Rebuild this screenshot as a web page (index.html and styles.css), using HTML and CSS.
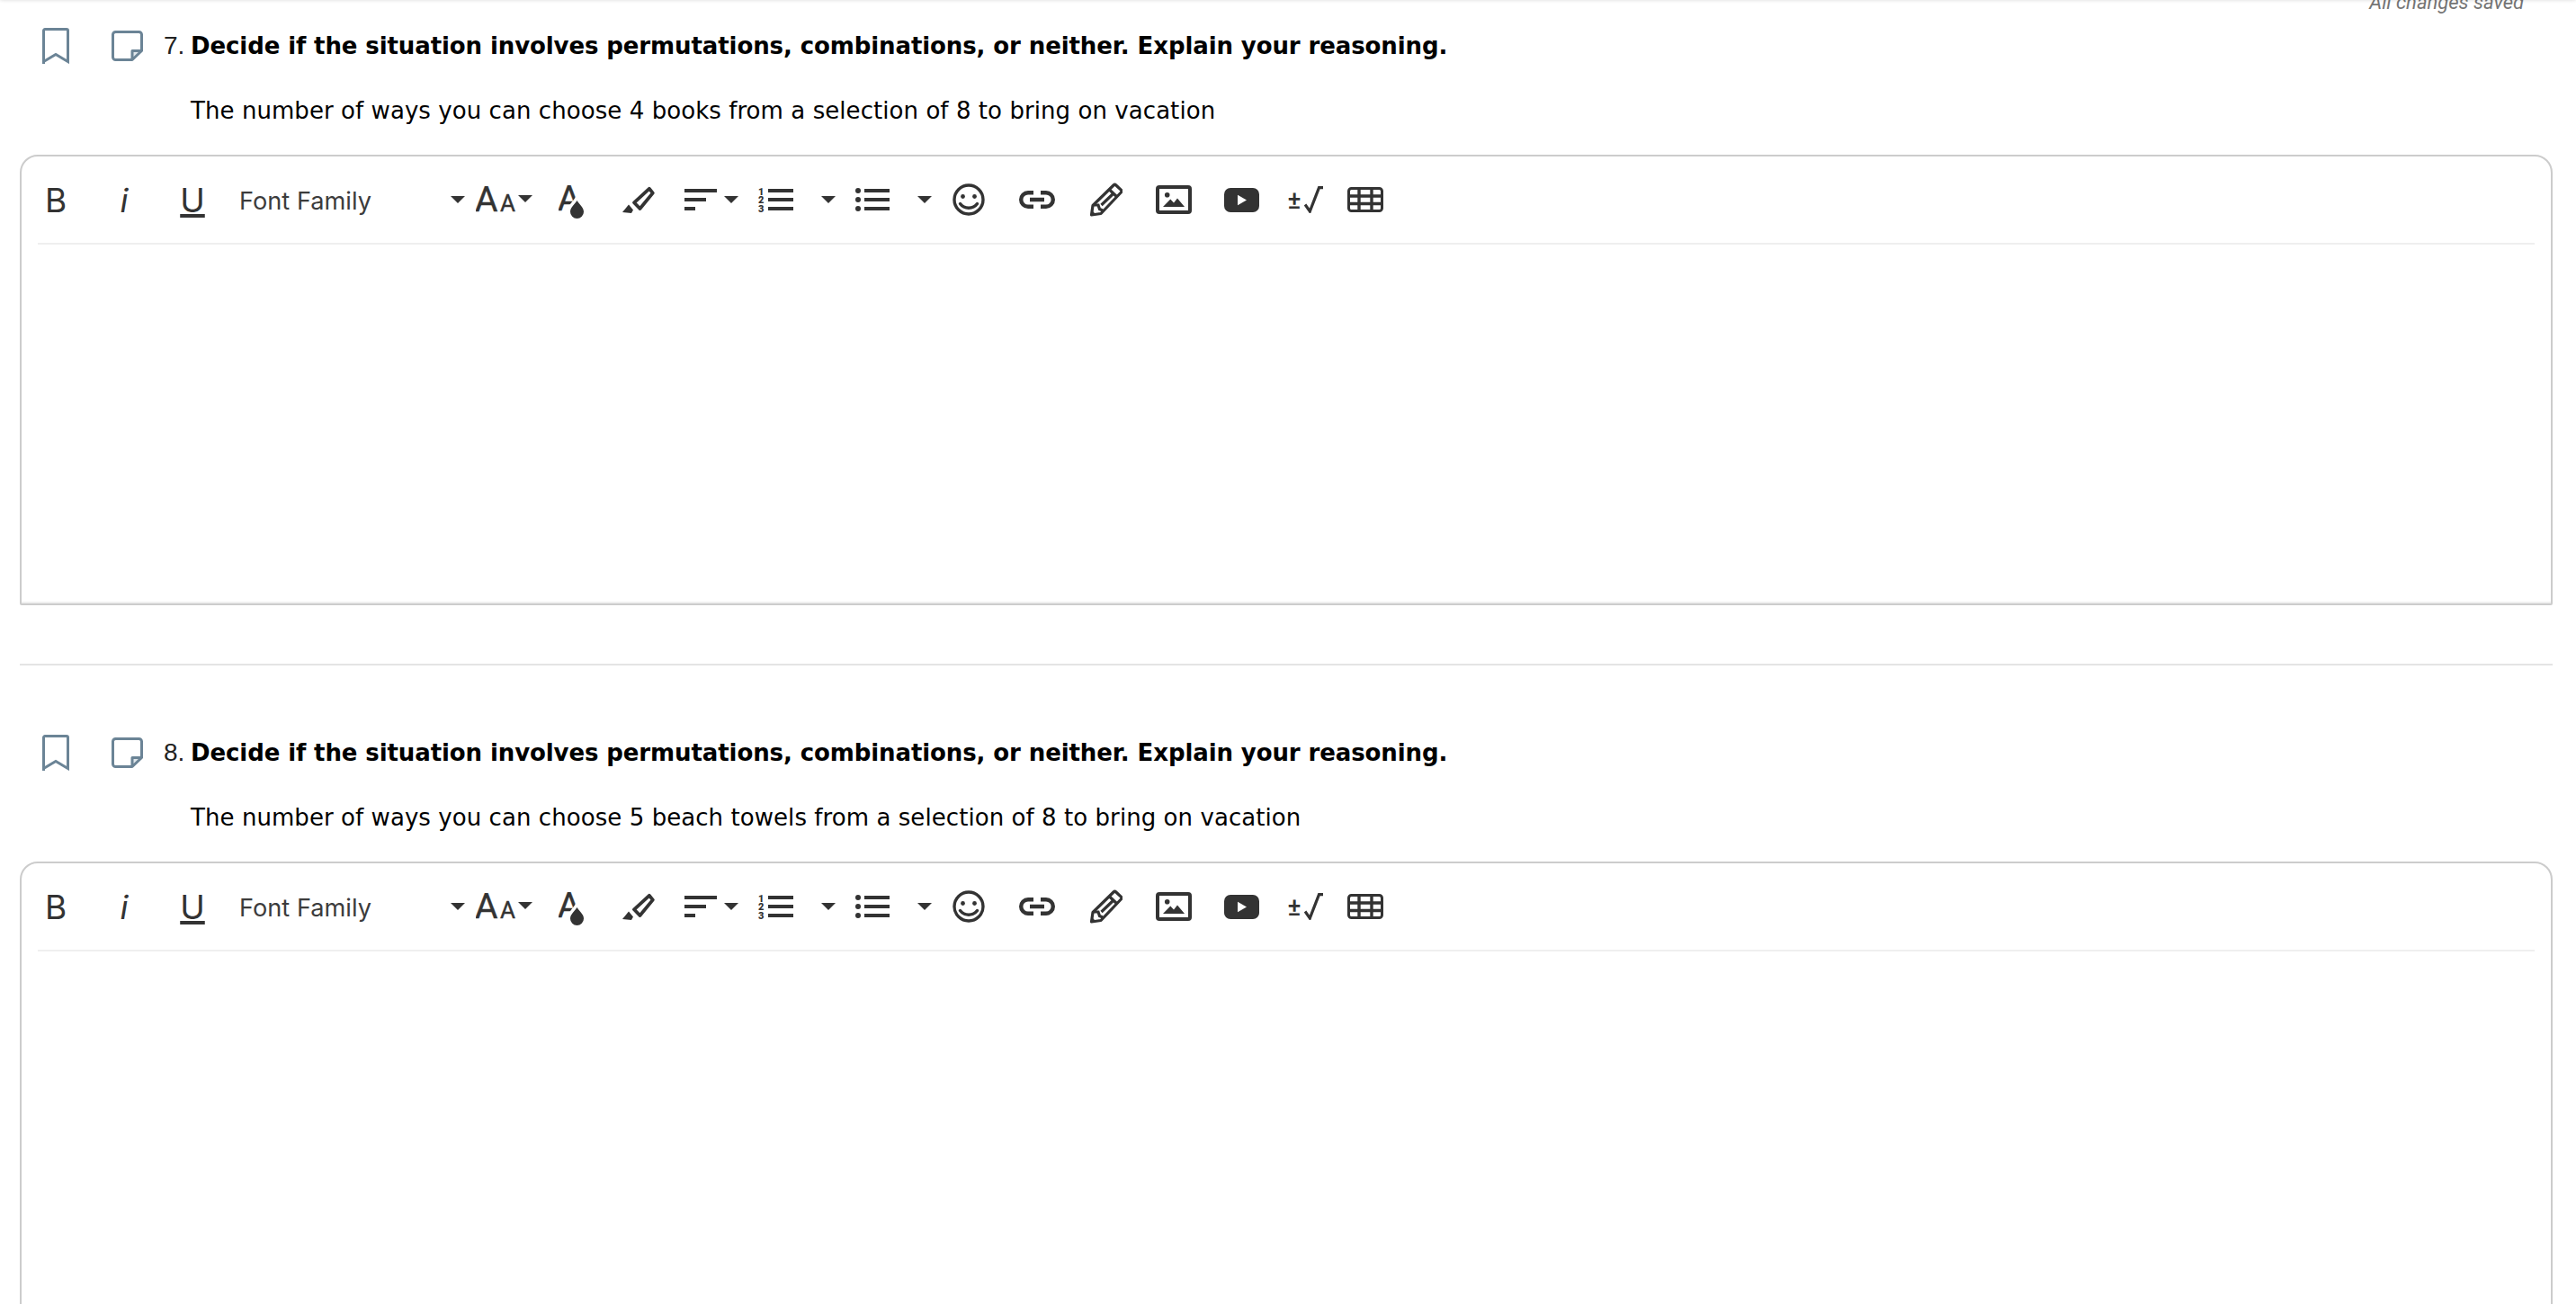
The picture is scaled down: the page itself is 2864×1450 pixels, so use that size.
FILE: index.html
```html
<!DOCTYPE html>
<html lang="en">
<head>
<meta charset="utf-8">
<title>Questions</title>
<link rel="stylesheet" href="styles.css">
</head>
<body>
<svg class="sprite" aria-hidden="true">
  <symbol id="i-bookmark" viewBox="0 0 30 40"><path d="M1.500 40V3a1.500 1.500 0 0 1 1.500-1.500h24A1.500 1.500 0 0 1 28.500 3v34.500L15 29.500 1.500 37.500" fill="none" stroke="#6b8496" stroke-width="3"/></symbol>
  <symbol id="i-note" viewBox="0 0 35 34"><path d="M23 32.500V22.500h10.500z" fill="#dfe6eb"/><path d="M4.500 1.500h26a3 3 0 0 1 3 3v18L23 32.500H4.500a3 3 0 0 1-3-3v-25a3 3 0 0 1 3-3zM23 32.500V22.500h10.500" fill="none" stroke="#6b8496" stroke-width="3" stroke-linejoin="round"/></symbol>
  <symbol id="i-caret" viewBox="0 0 16 8"><path d="M0 0h16L8 8z" fill="#333"/></symbol>
  <symbol id="i-mark" viewBox="0 0 37 32"><path d="M29.800 2.800 33.800 7.600 19.500 25 13 18.300z" fill="none" stroke="#333" stroke-width="3.800" stroke-linejoin="round"/><path d="M0 29 7 20.500 12 26.500 10 30z" fill="#333"/></symbol>
  <symbol id="i-align" viewBox="0 0 60 24"><path d="M0 0h36v4H0zM0 10h24v4H0zM0 20h12v4H0z" fill="#333"/><path d="M44 8h16l-8 8z" fill="#333"/></symbol>
  <symbol id="i-ul" viewBox="0 0 85 28"><circle cx="3" cy="4" r="3" fill="#333"/><circle cx="3" cy="14" r="3" fill="#333"/><circle cx="3" cy="24" r="3" fill="#333"/><path d="M10 2h28v4H10zM10 12h28v4H10zM10 22h28v4H10z" fill="#333"/><path d="M69 10h16l-8 8z" fill="#333"/></symbol>
  <symbol id="i-smile" viewBox="0 0 36 36"><circle cx="18" cy="18" r="16" fill="none" stroke="#333" stroke-width="3.400"/><circle cx="11.500" cy="14.500" r="2.400" fill="#333"/><circle cx="24.500" cy="14.500" r="2.400" fill="#333"/><path d="M8.500 22.500c2.200 3 5.800 4.700 9.500 4.700s7.300-1.700 9.500-4.700" fill="none" stroke="#333" stroke-width="3.400" stroke-linecap="round"/></symbol>
  <symbol id="i-link" viewBox="0 0 40 20"><path d="M16 2.200H10a7.800 7.800 0 0 0 0 15.600H16M24 2.200h6a7.800 7.800 0 0 1 0 15.600h-6M12 10h16" fill="none" stroke="#333" stroke-width="4.400"/></symbol>
  <symbol id="i-pencil" viewBox="0 0 36 38"><path d="M1.500 36 3 25.500 26 3a2 2 0 0 1 2.800 0l5.500 5.200a2 2 0 0 1 0 2.800L12 34.500z" fill="none" stroke="#333" stroke-width="3.200" stroke-linejoin="round"/><path d="M21 7.500l9 8.500M12.500 25 25 13M4 25h5l1.500 4.500L14 31" fill="none" stroke="#333" stroke-width="3.200"/><path d="M1.500 36 2 31l4 4z" fill="#333"/></symbol>
  <symbol id="i-image" viewBox="0 0 40 32"><rect x="2" y="2" width="36" height="28" rx="2" fill="none" stroke="#333" stroke-width="4"/><circle cx="12.700" cy="10.700" r="2.800" fill="#333"/><path d="M8 24 16.300 15.500 20 19.500 24 14.500 32 24z" fill="#333"/></symbol>
  <symbol id="i-video" viewBox="0 0 39 27"><rect width="39" height="27" rx="7" fill="#333"/><path d="M15 7.700 25 13.500 15 19.300z" fill="#fff"/></symbol>
  <symbol id="i-root" viewBox="0 0 21 30"><path d="M1 20.500 6.300 28 16.500 1.600H21" fill="none" stroke="#333" stroke-width="3.200"/></symbol>
  <symbol id="i-table" viewBox="0 0 40 28"><rect x="1.500" y="1.500" width="37" height="25" rx="3" fill="none" stroke="#333" stroke-width="3"/><path d="M1 10h38M1 18.500h38M13 1v26M27 1v26" fill="none" stroke="#333" stroke-width="3.400"/></symbol>
</svg>

<div class="topshade"></div>

<main class="page">
  <div class="status">All changes saved</div>

  <section class="question">
    <div class="qhead">
      <svg class="ic-bookmark"><use href="#i-bookmark"/></svg>
      <svg class="ic-note"><use href="#i-note"/></svg>
      <span class="qnum">7.</span>
      <strong class="qtitle">Decide if the situation involves permutations, combinations, or neither. Explain your reasoning.</strong>
    </div>
    <p class="prompt">The number of ways you can choose 4 books from a selection of 8 to bring on vacation</p>
    <div class="editor">
      <div class="toolbar">
        <span class="cell c-b">B</span>
        <span class="cell c-i">i</span>
        <span class="cell c-u">U</span>
        <span class="cell c-font"><span class="fontname">Font Family</span><svg class="caret"><use href="#i-caret"/></svg></span>
        <span class="cell c-size"><svg class="ic-size" viewBox="0 0 63 30"><text x="-1" y="28" class="g-a-big">A</text><text x="27" y="28" class="g-a-small">A</text><path d="M47 10h16l-8 8z" fill="#333"/></svg></span>
        <span class="cell c-color"><svg class="ic-color" viewBox="0 0 28 38"><text x="-1" y="28" class="g-a-big">A</text><path d="M20.500 17c2.500 4 7.500 7.500 7.500 12.500a7.500 7.500 0 0 1-15 0c0-5 5-8.500 7.500-12.500z" fill="#333" stroke="#fff" stroke-width="7" paint-order="stroke"/></svg></span>
        <span class="cell c-mark"><svg class="ic-mark"><use href="#i-mark"/></svg></span>
        <span class="cell c-align"><svg class="ic-align"><use href="#i-align"/></svg></span>
        <span class="cell c-ol"><svg class="ic-ol" viewBox="0 0 86 28"><text x="0" y="8.500" class="g-num">1</text><text x="0" y="18" class="g-num">2</text><text x="0" y="27.500" class="g-num">3</text><path d="M11 2h28v4H11zM11 12h28v4H11zM11 22h28v4H11z" fill="#333"/><path d="M70 10h16l-8 8z" fill="#333"/></svg></span>
        <span class="cell c-ul"><svg class="ic-ul"><use href="#i-ul"/></svg></span>
        <span class="cell c-smile"><svg class="ic-smile"><use href="#i-smile"/></svg></span>
        <span class="cell c-link"><svg class="ic-link"><use href="#i-link"/></svg></span>
        <span class="cell c-pencil"><svg class="ic-pencil"><use href="#i-pencil"/></svg></span>
        <span class="cell c-image"><svg class="ic-image"><use href="#i-image"/></svg></span>
        <span class="cell c-video"><svg class="ic-video"><use href="#i-video"/></svg></span>
        <span class="cell c-math"><span class="pm">±</span><svg class="ic-root"><use href="#i-root"/></svg></span>
        <span class="cell c-table"><svg class="ic-table"><use href="#i-table"/></svg></span>
      </div>
    </div>
  </section>

  <hr class="divider">

  <section class="question">
    <div class="qhead">
      <svg class="ic-bookmark"><use href="#i-bookmark"/></svg>
      <svg class="ic-note"><use href="#i-note"/></svg>
      <span class="qnum">8.</span>
      <strong class="qtitle">Decide if the situation involves permutations, combinations, or neither. Explain your reasoning.</strong>
    </div>
    <p class="prompt">The number of ways you can choose 5 beach towels from a selection of 8 to bring on vacation</p>
    <div class="editor">
      <div class="toolbar">
        <span class="cell c-b">B</span>
        <span class="cell c-i">i</span>
        <span class="cell c-u">U</span>
        <span class="cell c-font"><span class="fontname">Font Family</span><svg class="caret"><use href="#i-caret"/></svg></span>
        <span class="cell c-size"><svg class="ic-size" viewBox="0 0 63 30"><text x="-1" y="28" class="g-a-big">A</text><text x="27" y="28" class="g-a-small">A</text><path d="M47 10h16l-8 8z" fill="#333"/></svg></span>
        <span class="cell c-color"><svg class="ic-color" viewBox="0 0 28 38"><text x="-1" y="28" class="g-a-big">A</text><path d="M20.500 17c2.500 4 7.500 7.500 7.500 12.500a7.500 7.500 0 0 1-15 0c0-5 5-8.500 7.500-12.500z" fill="#333" stroke="#fff" stroke-width="7" paint-order="stroke"/></svg></span>
        <span class="cell c-mark"><svg class="ic-mark"><use href="#i-mark"/></svg></span>
        <span class="cell c-align"><svg class="ic-align"><use href="#i-align"/></svg></span>
        <span class="cell c-ol"><svg class="ic-ol" viewBox="0 0 86 28"><text x="0" y="8.500" class="g-num">1</text><text x="0" y="18" class="g-num">2</text><text x="0" y="27.500" class="g-num">3</text><path d="M11 2h28v4H11zM11 12h28v4H11zM11 22h28v4H11z" fill="#333"/><path d="M70 10h16l-8 8z" fill="#333"/></svg></span>
        <span class="cell c-ul"><svg class="ic-ul"><use href="#i-ul"/></svg></span>
        <span class="cell c-smile"><svg class="ic-smile"><use href="#i-smile"/></svg></span>
        <span class="cell c-link"><svg class="ic-link"><use href="#i-link"/></svg></span>
        <span class="cell c-pencil"><svg class="ic-pencil"><use href="#i-pencil"/></svg></span>
        <span class="cell c-image"><svg class="ic-image"><use href="#i-image"/></svg></span>
        <span class="cell c-video"><svg class="ic-video"><use href="#i-video"/></svg></span>
        <span class="cell c-math"><span class="pm">±</span><svg class="ic-root"><use href="#i-root"/></svg></span>
        <span class="cell c-table"><svg class="ic-table"><use href="#i-table"/></svg></span>
      </div>
    </div>
  </section>
</main>
</body>
</html>
```
FILE: styles.css
```css
html, body {
  margin: 0;
  height: 1450px;
  overflow: hidden;
  background: #fff;
}

.sprite {
  position: absolute;
  width: 0;
  height: 0;
}

.g-a-big { font: 400 39px "Roboto", sans-serif; fill: #333; stroke: #333; stroke-width: 0.4px; }
.g-a-small { font: 400 26px "Roboto", sans-serif; fill: #333; stroke: #333; stroke-width: 0.4px; }
.g-num { font: 900 11px "Roboto", sans-serif; fill: #333; }

.topshade {
  position: absolute;
  left: 0;
  right: 0;
  top: -4px;
  height: 4px;
  box-shadow: 0 0 4px rgba(0, 0, 0, 0.16);
}

.page {
  padding: 0 26px 0 22px;
}

.status {
  height: 26px;
  margin-top: -10px;
  padding-right: 32px;
  text-align: right;
  font: italic 400 22px/26px "Roboto", sans-serif;
  color: #757575;
}

.question {
  padding-top: 15px;
}

.qhead {
  display: flex;
  align-items: center;
  height: 40px;
  padding-left: 25px;
}

.ic-bookmark { width: 30px; height: 40px; flex: none; }
.ic-note { width: 35px; height: 34px; flex: none; margin-left: 47px; }

.qnum {
  margin-left: 23px;
  width: 30px;
  font: 400 28px/40px "Liberation Sans", sans-serif;
  color: #222;
}

.qtitle {
  font: 700 26px/40px "DejaVu Sans", sans-serif;
  letter-spacing: -0.1px;
  color: #000;
  white-space: nowrap;
}

.prompt {
  margin: 0;
  padding: 32px 0 0 190px;
  font: 400 26px/40px "DejaVu Sans", sans-serif;
  letter-spacing: 0.065px;
  color: #000;
  white-space: nowrap;
}

.editor {
  margin-top: 29px;
  height: 501px;
  box-sizing: border-box;
  border: 2px solid #ccc;
  border-radius: 20px 20px 2px 2px;
  box-shadow: inset 0 -2px 0 #efefef;
}

.divider {
  margin: 65px 0 62px;
  height: 2px;
  border: 0;
  background: #e4e4e4;
}

.toolbar {
  display: flex;
  align-items: center;
  height: 96px;
  position: relative;
  color: #333;
}

.toolbar::after {
  content: "";
  position: absolute;
  left: 18px;
  right: 18px;
  bottom: -2px;
  height: 2px;
  background: #efefef;
}

.cell {
  display: flex;
  align-items: center;
  justify-content: center;
  flex: none;
  height: 96px;
}

.c-b, .c-i, .c-u { padding-top: 1px; box-sizing: border-box; }
.c-b { width: 76px; font: 400 37px "Inter", sans-serif; }
.c-i { width: 76px; font: italic 400 37px "Inter", sans-serif; }
.c-u { width: 76px; font: 400 37px "Inter", sans-serif; text-decoration: underline; text-decoration-thickness: 4px; text-underline-offset: 2px; }
.c-font { width: 270px; justify-content: flex-start; padding-left: 14px; box-sizing: border-box; }
.fontname { width: 235px; font: 400 27.2px "Inter", sans-serif; color: #3c3c3c; padding-top: 2px; }
.caret { width: 16px; height: 8px; flex: none; }
.c-size { width: 77px; }
.ic-size { width: 63px; height: 30px; }
.c-color { width: 72px; }
.ic-color { width: 28px; height: 38px; margin-top: 6px; }
.c-mark { width: 78px; }
.ic-mark { width: 37px; height: 32px; margin-top: 2px; }
.c-align { width: 84px; }
.ic-align { width: 60px; height: 24px; }
.c-ol { width: 106px; }
.ic-ol { width: 86px; height: 28px; }
.c-ul { width: 109px; }
.ic-ul { width: 85px; height: 28px; }
.c-smile { width: 57px; }
.ic-smile { width: 36px; height: 36px; }
.c-link { width: 96px; }
.ic-link { width: 40px; height: 20px; }
.c-pencil { width: 57px; }
.ic-pencil { width: 36px; height: 38px; }
.c-image { width: 94px; }
.ic-image { width: 40px; height: 32px; }
.c-video { width: 56px; }
.ic-video { width: 39px; height: 27px; }
.c-math { width: 86px; gap: 3px; }
.pm { font: 500 28px "Roboto", sans-serif; }
.ic-root { width: 21px; height: 30px; }
.c-table { width: 47px; }
.ic-table { width: 40px; height: 28px; }
```
